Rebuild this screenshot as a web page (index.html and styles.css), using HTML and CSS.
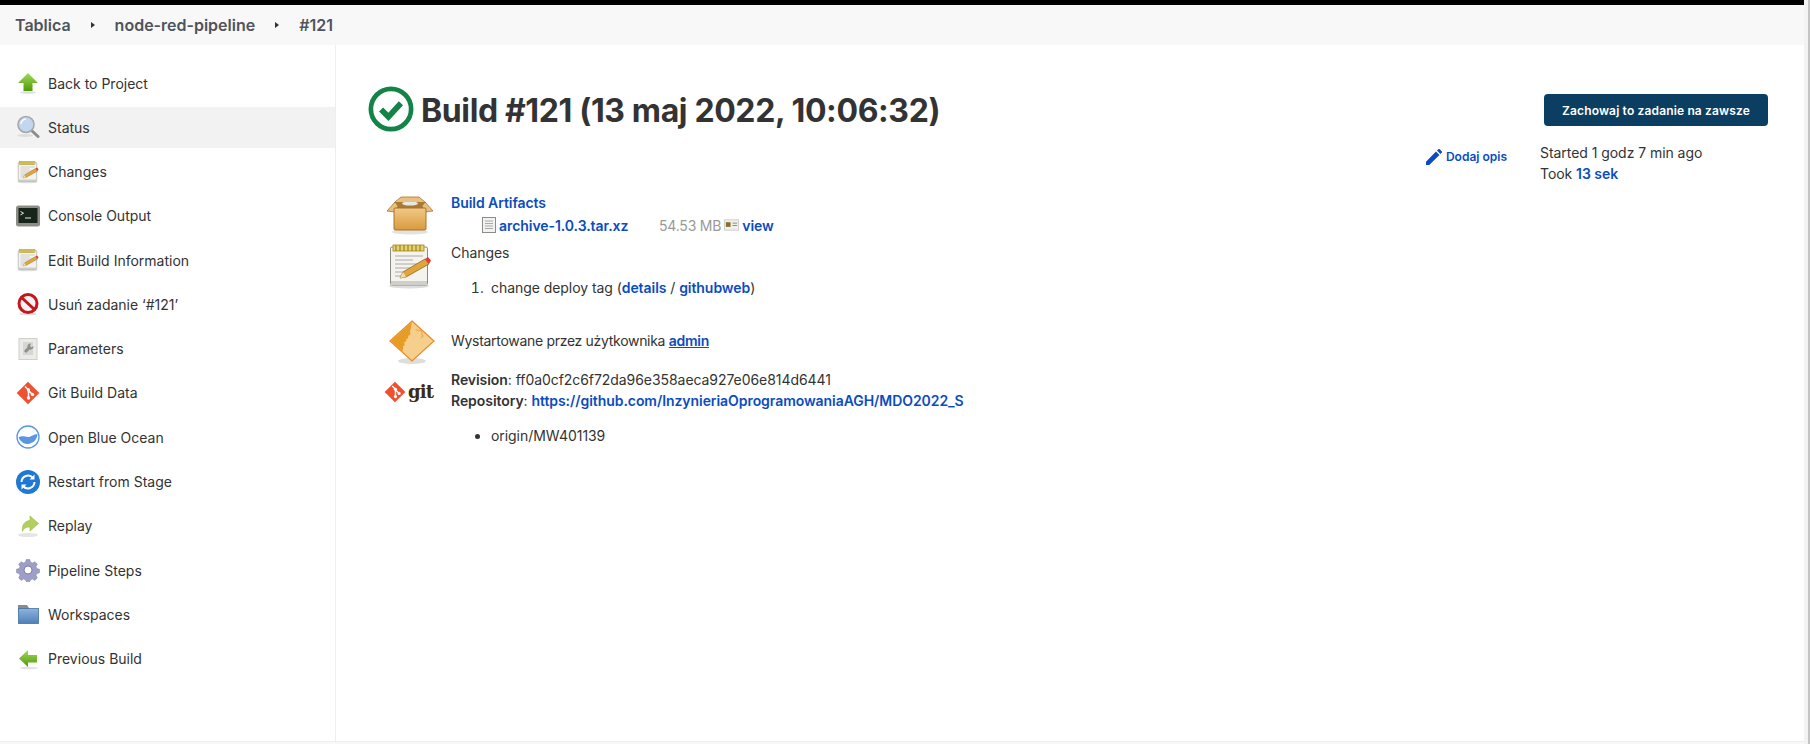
FILE: index.html
```html
<!DOCTYPE html>
<html lang="pl">
<head>
    <meta charset="UTF-8">
    <meta name="viewport" content="width=device-width, initial-scale=1.0">
    <title>node-red-pipeline #121</title>
    <link rel="stylesheet" href="styles.css">
</head>
<body>

    <!-- shared icons -->
    <svg class="icon-defs" width="0" height="0">
        <defs>
            <linearGradient id="greenGrad" x1="0" y1="0" x2="0" y2="1">
                <stop offset="0" stop-color="#a3da5c"/>
                <stop offset="1" stop-color="#4e9a06"/>
            </linearGradient>
            <linearGradient id="boxGrad" x1="0" y1="0" x2="0" y2="1">
                <stop offset="0" stop-color="#f0c987"/>
                <stop offset="1" stop-color="#d99a3f"/>
            </linearGradient>
            <linearGradient id="folderGrad" x1="0" y1="0" x2="0" y2="1">
                <stop offset="0" stop-color="#8fb4de"/>
                <stop offset="1" stop-color="#4f7fb8"/>
            </linearGradient>
            <symbol id="i-notepad" viewBox="0 0 48 48">
                <ellipse cx="23" cy="44" rx="20" ry="2.5" fill="#ddd"/>
                <rect x="4.5" y="5" width="37" height="38" rx="1.5" fill="#f4f3ee" stroke="#8a8a85"/>
                <rect x="5" y="39" width="36" height="4" fill="#cfcfc9"/>
                <rect x="7" y="3" width="31" height="6" fill="#e8d26a" stroke="#a08a20" stroke-width=".8"/>
                <path d="M10 3v6M14 3v6M18 3v6M22 3v6M26 3v6M30 3v6M34 3v6" stroke="#8c7710" stroke-width="1"/>
                <path d="M9 14h28M9 18h18M9 22h28M9 26h16M9 30h12M9 34h8" stroke="#aaa" stroke-width="1"/>
                <path d="M14 36l3-6 22-13 4 5-23 13z" fill="#e0a63c" stroke="#8f6a1a" stroke-width=".8"/>
                <path d="M39 17l3-2 3 3.5-2 3.500z" fill="#e23b3b"/>
                <path d="M14 36l3-6 3 5z" fill="#f3dcb0"/>
            </symbol>
            <symbol id="i-git" viewBox="0 0 24 24">
                <path d="M12 .7L23.300 12 12 23.300.7 12z" fill="#f0502f"/>
                <path d="M9 5.500l3.500 3.500M12.500 9v7.500M12.500 9.500l4 4" stroke="#fff" stroke-width="1.500" fill="none"/>
                <circle cx="12.500" cy="9" r="1.700" fill="#fff"/>
                <circle cx="12.500" cy="17" r="1.700" fill="#fff"/>
                <circle cx="16.500" cy="13.500" r="1.700" fill="#fff"/>
            </symbol>
        </defs>
    </svg>

    <div class="page">
        <div class="top-strip"></div>

        <div class="breadcrumbs">
            <a href="#" class="crumb">Tablica</a>
            <span class="crumb-arrow"></span>
            <a href="#" class="crumb">node-red-pipeline</a>
            <span class="crumb-arrow"></span>
            <a href="#" class="crumb">#121</a>
        </div>

        <div class="layout">
            <aside class="sidebar">
                <a href="#" class="task">
                    <svg class="task-icon" viewBox="0 0 24 24"><ellipse cx="12" cy="21.500" rx="8" ry="1.300" fill="#ddd"/><path d="M12 2l10 10h-5.500v8h-9v-8H2z" fill="url(#greenGrad)"/></svg>
                    Back to Project
                </a>
                <a href="#" class="task task-active">
                    <svg class="task-icon" viewBox="0 0 24 24"><ellipse cx="9" cy="20.500" rx="8" ry="1.500" fill="#ddd"/><path d="M15 15l7 6.500" stroke="#8d8d8d" stroke-width="3" stroke-linecap="round"/><circle cx="10" cy="9.500" r="8" fill="#c2d6ef" stroke="#a8a8a8" stroke-width="1.600"/><path d="M5 9a5 5 0 0 1 5-5" stroke="#fff" stroke-width="1.500" fill="none"/></svg>
                    Status
                </a>
                <a href="#" class="task">
                    <svg class="task-icon"><use href="#i-notepad"/></svg>
                    Changes
                </a>
                <a href="#" class="task">
                    <svg class="task-icon" viewBox="0 0 24 24"><rect x="0" y="1.500" width="24" height="21" rx="2.500" fill="#8c8d86"/><rect x="2.500" y="4" width="19" height="15" fill="#17241a"/><path d="M4.500 7.500l3 1.700-3 1.700" stroke="#e8e8e8" stroke-width="1" fill="none"/><path d="M9 14h6" stroke="#e8e8e8" stroke-width="1"/></svg>
                    Console Output
                </a>
                <a href="#" class="task">
                    <svg class="task-icon"><use href="#i-notepad"/></svg>
                    Edit Build Information
                </a>
                <a href="#" class="task">
                    <svg class="task-icon" viewBox="0 0 24 24"><ellipse cx="12" cy="22" rx="9" ry="1.300" fill="#ddd"/><circle cx="12" cy="11.500" r="9" fill="#f4f4f4" stroke="#c4161c" stroke-width="3"/><path d="M5.500 5.500l13 12" stroke="#c4161c" stroke-width="3"/></svg>
                    Usuń zadanie ‘#121’
                </a>
                <a href="#" class="task">
                    <svg class="task-icon" viewBox="0 0 24 24"><rect x="3" y="1.500" width="18" height="21" fill="#ebebe8" stroke="#cfcfcb"/><rect x="7" y="5" width="10" height="13" fill="#d6d6d3"/><path d="M15 6.500a3 3 0 0 0-3.500 3.800L8 14l2 2 3.700-3.500a3 3 0 0 0 3.800-3.500l-2 1.500-1.500-1.500z" fill="#8e8e8b"/></svg>
                    Parameters
                </a>
                <a href="#" class="task">
                    <svg class="task-icon"><use href="#i-git"/></svg>
                    Git Build Data
                </a>
                <a href="#" class="task">
                    <svg class="task-icon" viewBox="0 0 24 24"><circle cx="12" cy="12" r="11" fill="#fff" stroke="#5b96e4" stroke-width="1.300"/><path d="M2.500 12.500c4-2.300 6-.5 9.500-.5s5.500-2.800 9.500-3a9.800 9.800 0 0 1-19 3.500z" fill="#5b96e4"/></svg>
                    Open Blue Ocean
                </a>
                <a href="#" class="task">
                    <svg class="task-icon" viewBox="0 0 24 24"><circle cx="12" cy="12" r="12" fill="#1f78d1"/><path d="M5.500 12a6.500 6.500 0 0 1 11.500-4M18.500 12a6.500 6.500 0 0 1-11.500 4" stroke="#fff" stroke-width="2" fill="none"/><path d="M18.500 4.500v5h-5zM5.500 19.500v-5h5z" fill="#fff"/></svg>
                    Restart from Stage
                </a>
                <a href="#" class="task">
                    <svg class="task-icon" viewBox="0 0 24 24"><ellipse cx="12" cy="21" rx="10" ry="2" fill="#e4e4e4"/><path d="M14 2l8.500 7.500L14 17v-4c-4 0-6 1-7.500 4.500-1-6 2-10.500 7.500-11z" fill="#b5cf5f" stroke="#9ab73f" stroke-width=".6"/></svg>
                    Replay
                </a>
                <a href="#" class="task">
                    <svg class="task-icon" viewBox="0 0 24 24"><path d="M10 1h4l.8 3 2.200.9 2.600-1.500 2.800 2.800-1.500 2.600.9 2.200 3 .8v4l-3 .8-.9 2.200 1.500 2.600-2.800 2.800-2.600-1.500-2.200.9-.8 2h-4l-.8-2-2.200-.9-2.600 1.500-2.800-2.800 1.500-2.600-.9-2.200-3-.8v-4l3-.8.9-2.200-1.500-2.600 2.800-2.800L7 4.900 9.200 4z" fill="#9e9ec8" stroke="#7878a8" stroke-width=".5" transform="translate(1.200 .6) scale(.9)"/><circle cx="12" cy="12" r="4" fill="#fff" stroke="#66668f" stroke-width=".8"/></svg>
                    Pipeline Steps
                </a>
                <a href="#" class="task">
                    <svg class="task-icon" viewBox="0 0 24 24"><path d="M2 3h9l2 3v4H2z" fill="#8a8a8a"/><rect x="2.500" y="6.500" width="20" height="15" fill="url(#folderGrad)" stroke="#44709f" stroke-width=".8"/></svg>
                    Workspaces
                </a>
                <a href="#" class="task">
                    <svg class="task-icon" viewBox="0 0 24 24"><ellipse cx="13" cy="21" rx="9" ry="1.300" fill="#e4e4e4"/><path d="M3 11.500L12 3v5h9v7.500h-9V20z" fill="url(#greenGrad)"/></svg>
                    Previous Build
                </a>
            </aside>

            <main class="content">
                <div class="title-row">
                    <svg class="status-icon" viewBox="0 0 44 44"><circle cx="22" cy="22" r="19.250" fill="#fff" stroke="#138347" stroke-width="4.500"/><path d="M12.500 22.500l7 7 12-13" stroke="#138347" stroke-width="5.500" fill="none"/></svg>
                    <h1>Build #121 (13 maj 2022, 10:06:32)</h1>
                    <button class="btn-keep">Zachowaj to zadanie na zawsze</button>
                </div>

                <div class="meta-row">
                    <a href="#" class="add-desc">
                        <svg class="pencil" viewBox="0 0 16 16"><path d="M0 16v-3.300L10 2.600 13.400 6 3.300 16zM11 1.600L12.300.3a1 1 0 0 1 1.400 0l2 2a1 1 0 0 1 0 1.400L14.400 5z" fill="#0b4cc0"/></svg>
                        Dodaj opis
                    </a>
                    <div class="times">
                        <div>Started 1 godz 7 min ago</div>
                        <div>Took <a href="#" class="lnk">13 sek</a></div>
                    </div>
                </div>

                <div class="summary">
                    <div class="summary-row row-artifacts">
                        <svg class="big-icon" viewBox="0 0 48 48">
                            <ellipse cx="24" cy="40" rx="18" ry="2.500" fill="#e2e2e2"/>
                            <path d="M8 10h32l-3 7H11z" fill="#a97a35"/>
                            <ellipse cx="24" cy="11.500" rx="8" ry="2" fill="#e8e8e4"/>
                            <path d="M9 10L1 19l8 1 3-6zM39 10l8 9-8 1-3-6zM9 10l6-5h18l6 5" fill="#eac07e" stroke="#a8732a" stroke-width=".8"/>
                            <rect x="8" y="16" width="32" height="22" rx="1" fill="url(#boxGrad)" stroke="#a8732a"/>
                        </svg>
                        <div class="summary-text">
                            <a href="#" class="lnk">Build Artifacts</a>
                            <div class="artifact">
                                <svg class="file-icon" viewBox="0 0 14 16"><rect x=".5" y=".5" width="13" height="15" fill="#f2f2f0" stroke="#8c8c8c"/><path d="M3 4h8M3 6.500h8M3 9h8M3 11.500h8" stroke="#aaa"/></svg>
                                <a href="#" class="lnk file-name">archive-1.0.3.tar.xz</a>
                                <span class="file-size">54.53 MB</span>
                                <svg class="view-icon" viewBox="0 0 16 14"><rect x=".5" y="1.500" width="15" height="11" fill="#f0f0ec" stroke="#ccc"/><rect x="2" y="4" width="5" height="5" fill="#85702b"/><path d="M9 5h5M9 7.500h5" stroke="#888"/></svg>
                                <a href="#" class="lnk">view</a>
                            </div>
                        </div>
                    </div>

                    <div class="summary-row row-changes">
                        <svg class="big-icon"><use href="#i-notepad"/></svg>
                        <div class="summary-text">
                            <div>Changes</div>
                            <ol class="change-list">
                                <li>change deploy tag (<a href="#" class="lnk">details</a> / <a href="#" class="lnk">githubweb</a>)</li>
                            </ol>
                        </div>
                    </div>

                    <div class="summary-row row-cause">
                        <svg class="big-icon cause-icon" viewBox="0 0 48 48">
                            <ellipse cx="24" cy="42" rx="14" ry="3" fill="#ddd"/>
                            <path d="M24 2l22 20-22 20L2 22z" fill="#f7cf8d" stroke="#ec8a24" stroke-width="1.200"/>
                            <path d="M24 3L3 22l12 11c-1-3 1-4 0-6 2 0 2-2 1-4 2 0 3-1 2-3 2 0 3-1 2-3 2-1 3-2 2-4z" fill="#e79c26"/>
                            <path d="M28 10c1 2 3 2 4 1l2 2c-1 1 0 3 1 4l-2 2" stroke="#eeb055" stroke-width="1.500" fill="none"/>
                        </svg>
                        <div class="summary-text cause-text">Wystartowane przez użytkownika <a href="#" class="lnk lnk-under">admin</a></div>
                    </div>

                    <div class="summary-row row-git">
                        <div class="git-logo">
                            <svg class="git-mark"><use href="#i-git"/></svg>
                            <span class="git-word">git</span>
                        </div>
                        <div class="summary-text">
                            <div class="git-line"><b>Revision</b>: ff0a0cf2c6f72da96e358aeca927e06e814d6441</div>
                            <div class="git-line"><b>Repository</b>: <a href="#" class="lnk">https://github.com/InzynieriaOprogramowaniaAGH/MDO2022_S</a></div>
                            <ul class="branch-list">
                                <li>origin/MW401139</li>
                            </ul>
                        </div>
                    </div>
                </div>
            </main>
        </div>

        <div class="page-foot"></div>
    </div>

    <div class="scrollbar"></div>

</body>
</html>
```

FILE: styles.css
```css
* {
    padding: 0;
    margin: 0;
    box-sizing: border-box;
}

html, body {
    height: 744px;
    overflow: hidden;
}

body {
    display: flex;
    background-color: #fff;
    color: #333;
    font-family: Inter, 'Noto Sans', sans-serif;
    font-size: 14px;
}

a {
    text-decoration: none;
}

.icon-defs {
    position: absolute;
}

.page {
    flex: 1;
    min-width: 0;
    display: flex;
    flex-direction: column;
}

.scrollbar {
    width: 6px;
    background-color: #f3f3f3;
    border-right: 2px solid #c4c4c4;
}

.top-strip {
    height: 5px;
    background-color: #000;
}

.breadcrumbs {
    height: 40px;
    display: flex;
    align-items: center;
    padding-left: 15px;
    background-color: #f8f8f8;
}

.crumb {
    color: #4d545d;
    font-size: 16px;
    font-weight: 600;
}

.crumb-arrow {
    width: 0;
    height: 0;
    margin: 0 20px 0 20px;
    border-left: 4px solid #333;
    border-top: 3.500px solid transparent;
    border-bottom: 3.500px solid transparent;
}

.layout {
    flex: 1;
    display: flex;
    min-height: 0;
}

.sidebar {
    width: 336px;
    padding-top: 16px;
    border-right: 1px solid #eee;
}

.task {
    height: 44.270px;
    display: flex;
    align-items: center;
    gap: 8px;
    padding-left: 16px;
    color: #333;
}

.task-active {
    background-color: #f2f2f2;
    height: 41px;
    margin: 1.635px 0;
}

.task-icon {
    width: 24px;
    height: 24px;
}

.content {
    flex: 1;
    padding: 38px 36px 0 32px;
}

.title-row {
    display: flex;
    align-items: center;
    height: 58px;
    margin-top: -2px;
}

.status-icon {
    width: 46px;
    height: 46px;
    margin: -3px 7px 0 0;
}

h1 {
    flex: 1;
    font-size: 32px;
    font-weight: 700;
    letter-spacing: -.37px;
    color: #333;
}

.btn-keep {
    width: 224px;
    height: 32px;
    background-color: #0b3e61;
    color: #fff;
    font-family: inherit;
    font-size: 12px;
    font-weight: 600;
    letter-spacing: .15px;
    border: none;
    border-radius: 4px;
}

.meta-row {
    display: flex;
    justify-content: flex-end;
    align-items: flex-start;
    margin-top: 2.500px;
}

.add-desc {
    display: flex;
    align-items: center;
    gap: 4px;
    margin: 7px 33px 0 0;
    color: #0b4cc0;
    font-size: 12px;
    font-weight: 600;
}

.pencil {
    width: 16px;
    height: 16px;
}

.times {
    width: 228px;
    line-height: 21px;
    letter-spacing: -.05px;
}

.lnk {
    color: #0b4cc0;
    font-weight: 600;
}

.lnk-under {
    text-decoration: underline;
}

.summary {
    margin-top: 8px;
    padding-left: 18px;
}

.summary-row {
    display: flex;
}

.big-icon {
    width: 48px;
    height: 48px;
    flex-shrink: 0;
}

.summary-text {
    margin-left: 17px;
    line-height: 21px;
    letter-spacing: -.06px;
}

.row-artifacts {
    height: 50.600px;
}

.artifact {
    display: flex;
    align-items: center;
    margin: 2px 0 0 31px;
}

.file-icon {
    width: 14px;
    height: 16px;
    margin-right: 3px;
}

.file-name {
    width: 160px;
}

.file-size {
    color: #999;
    margin-right: 3px;
    letter-spacing: -.2px;
}

.view-icon {
    width: 15px;
    height: 14px;
    margin-right: 3px;
}

.row-changes {
    height: 70.200px;
}

.change-list {
    margin: 13.700px 0 0 40px;
}

.change-list li::marker {
    content: counter(list-item) ".\00a0\00a0";
}

.row-cause {
    height: 56.600px;
    align-items: center;
}

.cause-icon {
    margin: 4.600px -2px 0 2px;
}

.cause-text {
    letter-spacing: -.3px;
}

.git-logo {
    display: flex;
    align-items: center;
    width: 48px;
    height: 26px;
    margin: 10px 0 0 -2px;
    padding-right: 0;
    gap: 2px;
    flex-shrink: 0;
}

.row-git .summary-text {
    margin-left: 19px;
}

.git-mark {
    width: 22px;
    height: 22px;
    flex-shrink: 0;
}

.git-word {
    color: #3d2a0f;
    font-family: 'DejaVu Serif', serif;
    font-size: 18px;
    font-weight: 700;
    line-height: 22px;
    letter-spacing: -.8px;
}

.git-line b {
    font-weight: 600;
}

.branch-list {
    margin: 14px 0 0 40px;
}

.page-foot {
    height: 3px;
    background-color: #f8f8f8;
    border-top: 1px solid #eee;
}
```
